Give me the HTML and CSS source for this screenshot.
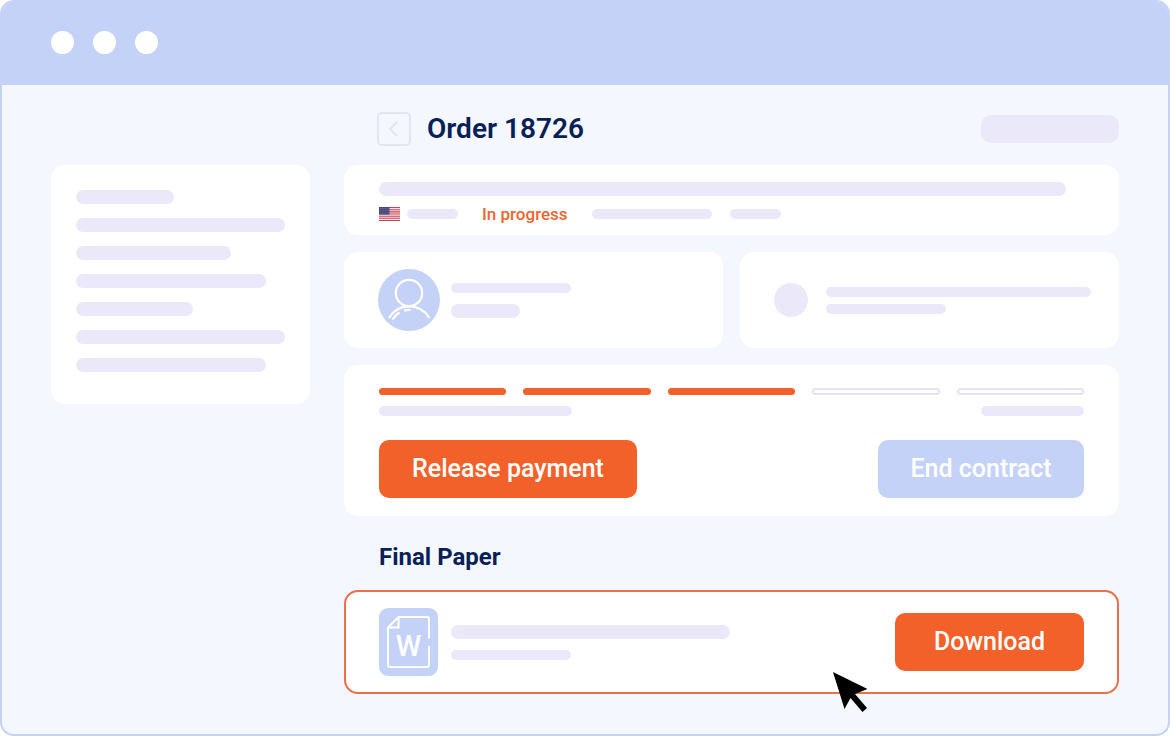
FILE: index.html
```html
<!DOCTYPE html>
<html lang="en">
<head>
<meta charset="utf-8">
<title>Order 18726</title>
<link rel="stylesheet" href="styles.css">
</head>
<body>
<div class="window">
  <header class="titlebar"><span class="dot"></span><span class="dot"></span><span class="dot"></span></header>
  <div class="content">
    <aside class="card sidebar">
      <span class="bar bar-md" style="width:47%"></span>
      <span class="bar bar-md"></span>
      <span class="bar bar-md" style="width:74%"></span>
      <span class="bar bar-md" style="width:91%"></span>
      <span class="bar bar-md" style="width:56%"></span>
      <span class="bar bar-md"></span>
      <span class="bar bar-md" style="width:91%"></span>
    </aside>
    <main class="main">
      <div class="heading">
        <button class="back" type="button" aria-label="Back">
          <svg width="14" height="18" viewBox="0 0 14 18"><path d="M10 2 3 9l7 7"/></svg>
        </button>
        <h1>Order 18726</h1>
        <span class="heading-pill"></span>
      </div>

      <section class="card summary">
        <span class="bar bar-md" style="width:97.5%"></span>
        <div class="meta">
          <svg class="flag" width="21" height="14" viewBox="0 0 21 14">
            <rect width="21" height="14" fill="#f3e6ea"/>
            <path d="M0 .5h21M0 2.700h21M0 4.900h21M0 7h21M0 9.200h21M0 11.300h21M0 13.500h21" stroke="#cf3f55" stroke-width="1.100"/>
            <rect width="10.500" height="7.500" fill="#47497c"/>
            <path d="M1 1.500h9M1 3.700h9M1 5.900h9" stroke="#8c8fb4" stroke-width=".6" stroke-dasharray=".8 .9"/>
          </svg>
          <span class="bar bar-sm w-tiny"></span>
          <span class="status">In progress</span>
          <span class="bar bar-sm w-short"></span>
          <span class="bar bar-sm w-tiny"></span>
        </div>
      </section>

      <div class="pair">
        <section class="card person">
          <svg width="62" height="62" viewBox="0 0 62 62" fill="none" stroke="#fff" stroke-width="2.200">
            <circle cx="31" cy="31" r="31" fill="#c5d2f7" stroke="none"/>
            <circle cx="31" cy="24" r="13.200"/>
            <path d="M11 49C20 33.500 42 33.500 51.500 49M14.500 50.500Q17.500 46 21.500 43.500M26 41.600Q29 40.800 32.500 41"/>
          </svg>
          <div class="lines person-lines">
            <span class="bar bar-sm w-short"></span>
            <span class="bar bar-md w-small"></span>
          </div>
        </section>
        <section class="card note">
          <span class="bullet"></span>
          <div class="lines note-lines">
            <span class="bar bar-sm"></span>
            <span class="bar bar-sm w-short"></span>
          </div>
        </section>
      </div>

      <section class="card progress">
        <div class="steps">
          <span class="step done"></span><span class="step done"></span><span class="step done"></span><span class="step"></span><span class="step"></span>
        </div>
        <div class="row captions">
          <span class="bar bar-sm w-long"></span>
          <span class="bar bar-sm w-mid"></span>
        </div>
        <div class="row">
          <button class="btn btn-release" type="button">Release payment</button>
          <button class="btn btn-end" type="button">End contract</button>
        </div>
      </section>

      <h2>Final Paper</h2>
      <section class="card file">
        <svg width="59" height="68" viewBox="0 0 59 68">
          <rect width="59" height="68" rx="9" fill="#c5d2f7"/>
          <path d="M50 30.500V11q0-2-2-2H19.500L9 19.500V57q0 2 2 2h37q2 0 2-2V38M19.500 9v10.500H9" fill="none" stroke="#fff" stroke-width="2"/>
          <text x="29.500" y="47.500" text-anchor="middle" class="doc-letter">W</text>
        </svg>
        <div class="lines file-lines">
          <span class="bar bar-md w-name"></span>
          <span class="bar bar-sm w-short"></span>
        </div>
        <button class="btn btn-download" type="button">Download</button>
        <svg class="cursor" width="36" height="42" viewBox="0 0 36 42"><path d="M0 0 34.500 17 22 22 34 36 29.500 40 17.500 26 11.500 37Z"/></svg>
      </section>
    </main>
  </div>
</div>
</body>
</html>
```
FILE: styles.css
```css
* { box-sizing: border-box; }
body { margin: 0; background: #fff; font-family: Roboto, "Liberation Sans", sans-serif; }
.window {
  min-height: 100vh;
  border: 2px solid #c5d2f7;
  border-radius: 14px;
  background: #f4f7fe;
  overflow: hidden;
}
.titlebar {
  display: flex;
  align-items: center;
  gap: 19px;
  height: 83px;
  padding: 0 0 2px 49px;
  background: #c5d2f7;
}
.dot { width: 23px; height: 23px; border-radius: 50%; background: #fff; }
.content {
  display: grid;
  grid-template-columns: 259px 1fr;
  column-gap: 34px;
  align-items: start;
  padding: 0 49px 40px;
}
.card { border-radius: 14px; background: #fff; }
.bar { display: block; border-radius: 7px; background: #ebe9f9; }
.bar-md { height: 14px; }
.bar-sm { height: 10px; border-radius: 5px; }
.w-tiny { width: 51px; }
.w-small { width: 69px; }
.w-mid { width: 103px; }
.w-short { width: 120px; }
.w-long { width: 193px; }
.w-name { width: 279px; }
.sidebar {
  display: grid;
  gap: 14px;
  margin-top: 80px;
  padding: 25px 25px 32px;
}
.main { display: flex; flex-direction: column; }
.heading { display: flex; align-items: center; height: 80px; padding: 8px 0 0 33px; }
.back {
  display: grid;
  place-items: center;
  width: 34px;
  height: 34px;
  padding: 0;
  border: 2px solid #e3e3f4;
  border-radius: 5px;
  background: none;
}
.back path { fill: none; stroke: #e3e3f4; stroke-width: 2; }
h1, h2 { margin: 0; color: #081f57; }
h1 { margin-left: 16px; font-size: 28px; font-weight: 600; line-height: 32px; }
.heading-pill { width: 138px; height: 28px; margin-left: auto; border-radius: 10px; background: #ebe9f9; }
.summary { padding: 17px 35px 9px; }
.meta { display: flex; align-items: center; height: 24px; margin-top: 6px; }
.flag { margin-right: 7px; }
.status { margin: 0 24px; color: #ee6530; font-size: 17px; font-weight: 500; line-height: 24px; }
.meta .w-short { margin-right: 18px; }
.pair { display: grid; grid-template-columns: 1fr 1fr; gap: 17px; margin: 17px 0; }
.person, .note { display: flex; align-items: center; height: 96px; padding: 0 28px 0 34px; }
.lines { display: grid; flex: 1; }
.person-lines { gap: 11px; margin-left: 11px; }
.note-lines { gap: 7px; margin-left: 18px; }
.bullet { width: 34px; height: 34px; border-radius: 50%; background: #ebe9f9; }
.progress { padding: 23px 35px 18px; }
.steps { display: grid; grid-template-columns: repeat(5, 1fr); gap: 17px; }
.step { height: 7px; border: 2px solid #e3e3f4; border-radius: 4px; }
.step.done { border-color: #f26129; background: #f26129; }
.row { display: flex; justify-content: space-between; }
.captions { margin: 11px 0 24px; }
.btn {
  height: 58px;
  padding: 0;
  border: 0;
  border-radius: 10px;
  background: #f26129;
  color: #fff;
  font: 500 25px/32px Roboto, "Liberation Sans", sans-serif;
}
.btn-release { width: 258px; }
.btn-end { width: 206px; background: #c5d2f7; }
.btn-download { width: 189px; }
h2 { margin: 25px 0 17px 35px; font-size: 24px; font-weight: 700; line-height: 32px; }
.file {
  position: relative;
  display: flex;
  align-items: center;
  height: 104px;
  padding: 0 33px;
  border: 2px solid #e8704a;
}
.file-lines { gap: 11px; margin-left: 13px; }
.doc-letter { fill: #fff; font: 500 29px Roboto, sans-serif; }
.cursor { position: absolute; right: 248px; bottom: -22px; }
```
